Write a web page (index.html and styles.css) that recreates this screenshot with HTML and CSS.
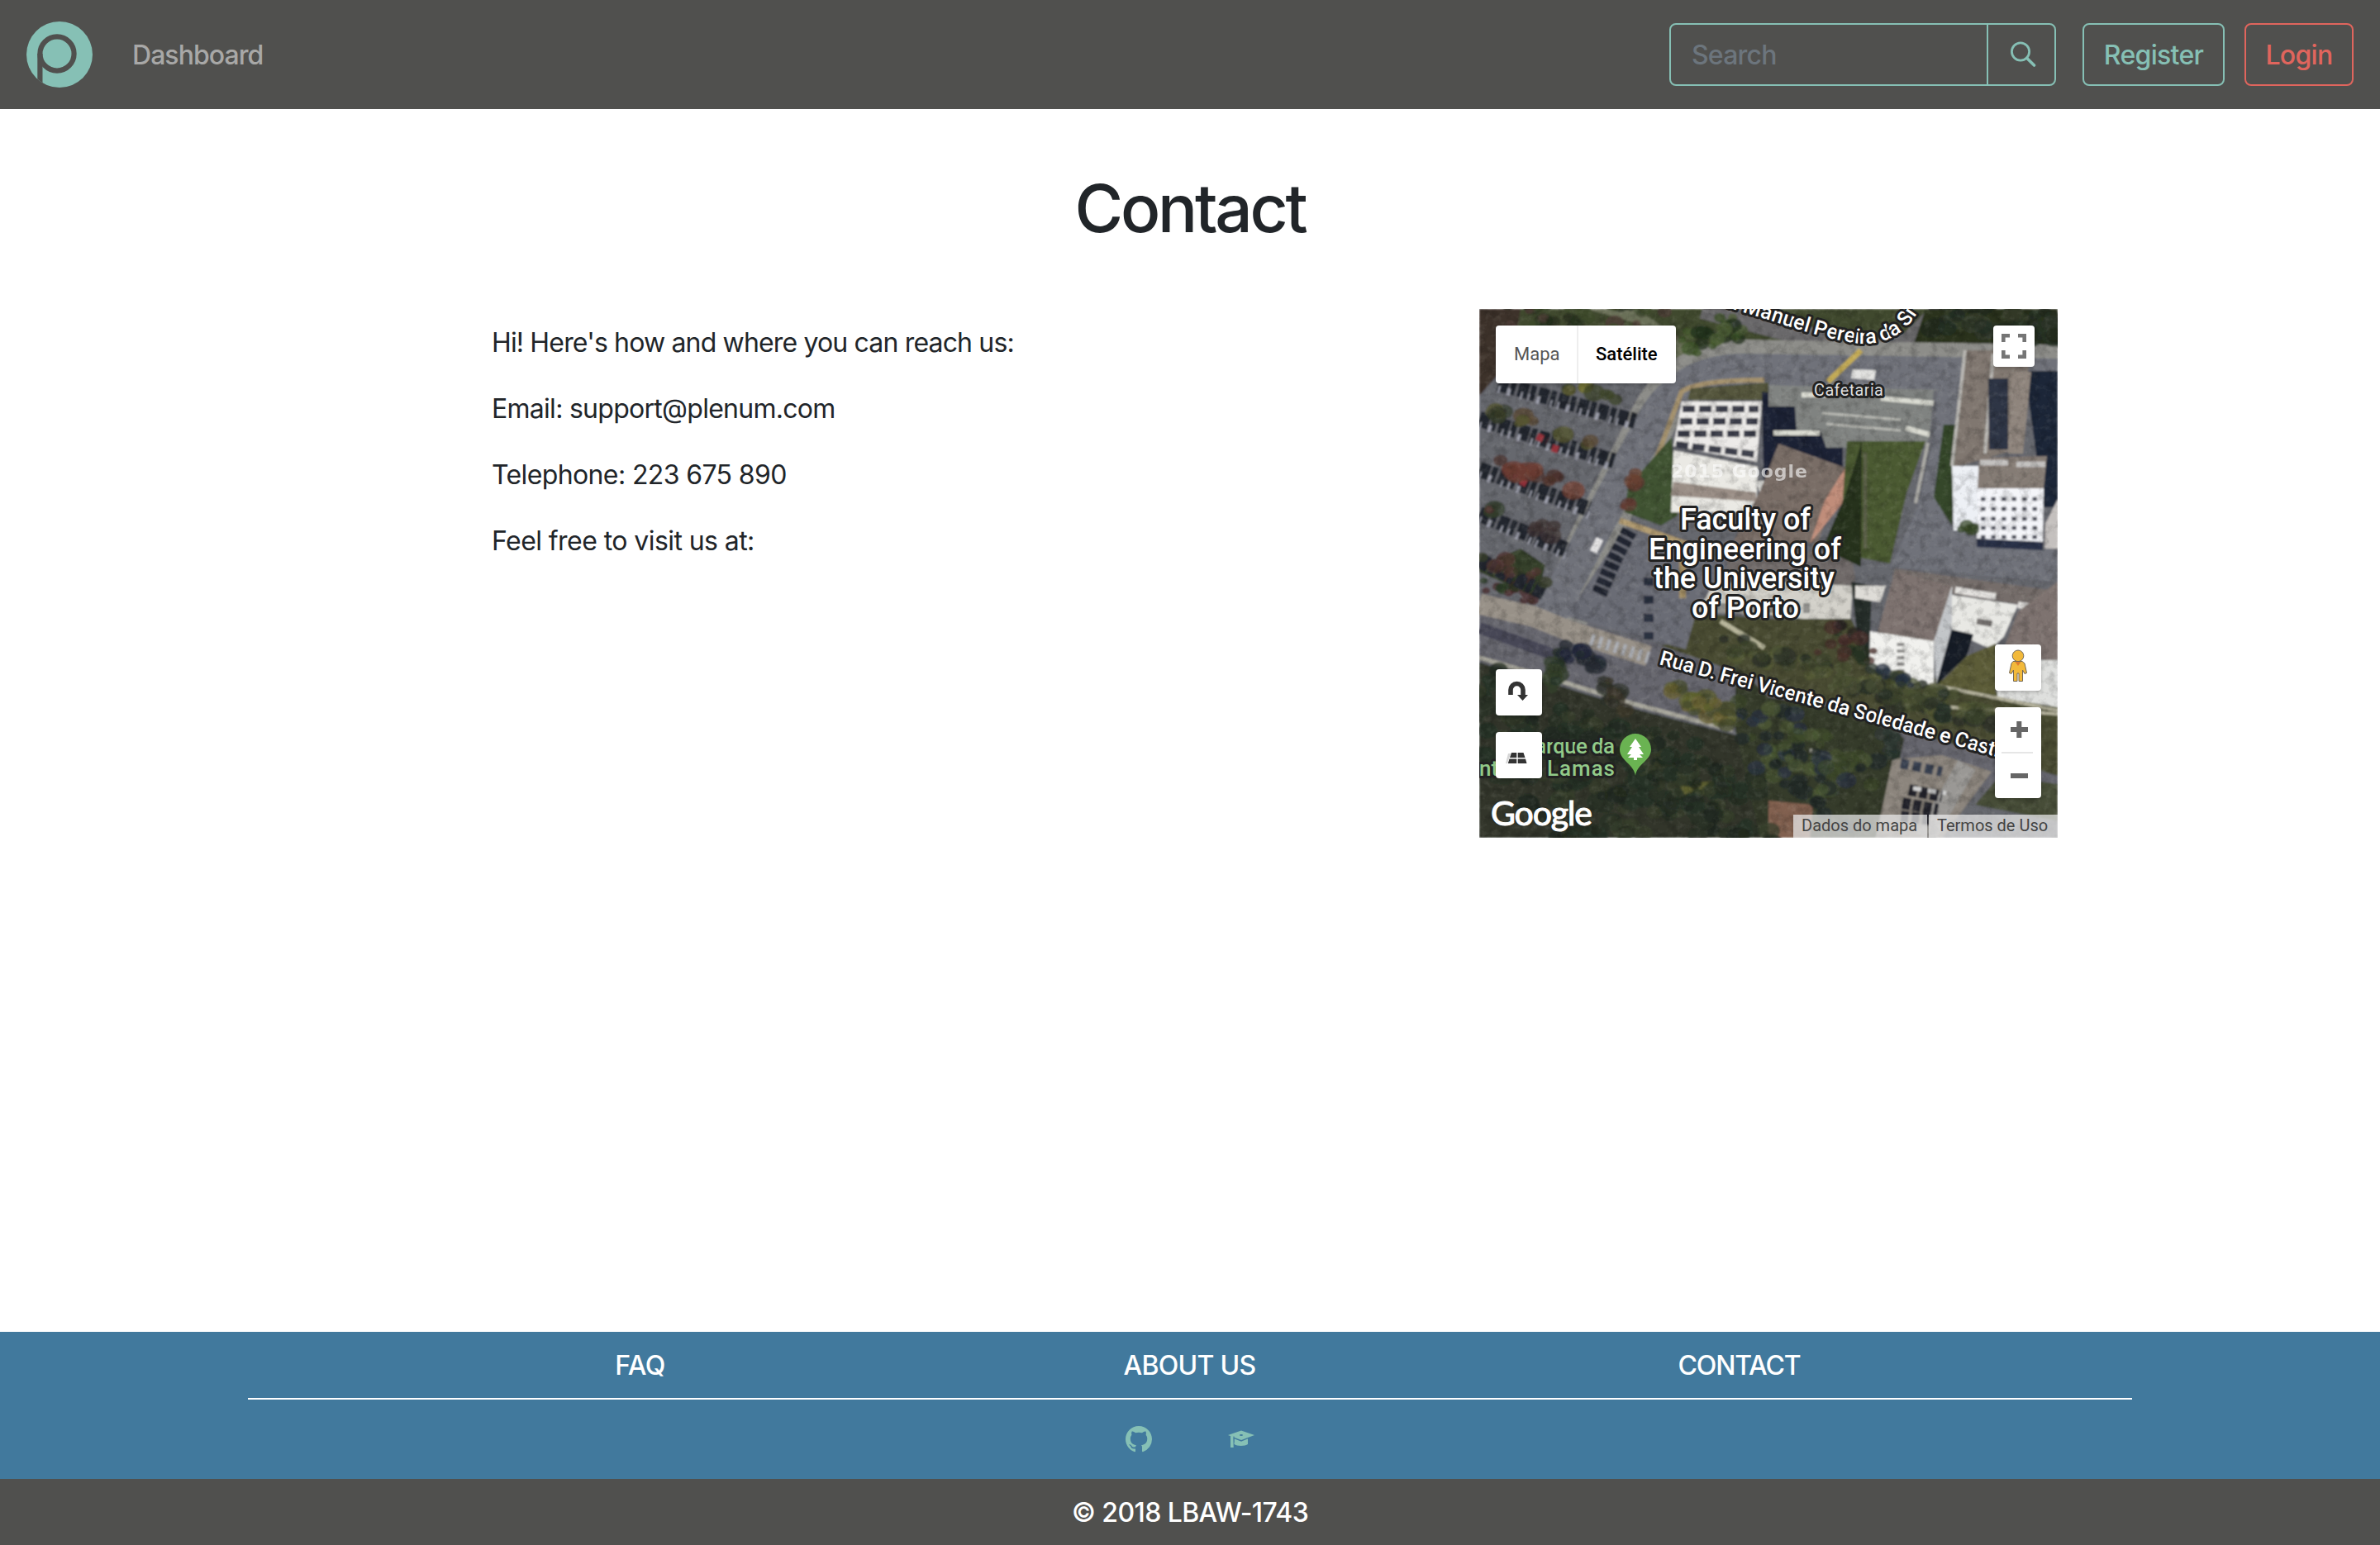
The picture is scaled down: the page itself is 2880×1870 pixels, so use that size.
FILE: index.html
```html
<!DOCTYPE html>
<html lang="en">
<head>
<meta charset="utf-8">
<title>Contact</title>
<link rel="stylesheet" href="styles.css">
</head>
<body>
<header class="navbar">
  <a class="brand"><svg width="80" height="80" viewBox="0 0 80 80"><defs><clipPath id="disc"><circle cx="40" cy="40" r="40"/></clipPath></defs><g clip-path="url(#disc)"><rect width="80" height="80" fill="#86c0b5"/><circle cx="37" cy="39" r="20.6" fill="none" stroke="#50504e" stroke-width="6.2"/><path d="M16.4 39V80" stroke="#50504e" stroke-width="6.2"/></g></svg></a>
  <a class="nav-link"><span class="t-dash">Dashboard</span></a>
  <div class="search">
    <span class="search-input"><span class="t-search">Search</span></span>
    <span class="search-btn"><svg width="32" height="32" viewBox="0 0 32 32" fill="none" stroke="#86c0b5"><circle cx="13" cy="12.5" r="10.6" stroke-width="2.8"/><path d="M20.6 20.2 29.5 29" stroke-width="3.6" stroke-linecap="round"/></svg></span>
  </div>
  <a class="btn btn-register"><span class="t-reg">Register</span></a>
  <a class="btn btn-login"><span class="t-log">Login</span></a>
</header>

<main>
  <h1>Contact</h1>
  <div class="content">
    <section class="info">
      <p class="p1">Hi! Here's how and where you can reach us:</p>
      <p class="p2">Email: support@plenum.com</p>
      <p class="p3">Telephone: 223 675 890</p>
      <p class="p4">Feel free to visit us at:</p>
    </section>
    <section class="map">
      <svg class="tiles" width="700" height="640" viewBox="0 0 700 640">
        <defs>
          <filter id="ground" x="0" y="0" width="100%" height="100%"><feTurbulence type="fractalNoise" baseFrequency=".09" numOctaves="4" seed="8"/><feColorMatrix values="0 0 0 0 0  0 0 0 0 0  0 0 0 0 0  2.6 0 0 0 -1.15"/></filter>
          <filter id="light" x="0" y="0" width="100%" height="100%"><feTurbulence type="fractalNoise" baseFrequency=".13" numOctaves="3" seed="3"/><feColorMatrix values="0 0 0 0 1  0 0 0 0 1  0 0 0 0 .9  0 2 0 0 -1"/></filter>
          <filter id="soft"><feGaussianBlur stdDeviation="1"/></filter>
          <path id="rua" d="M217 430 420 485 720 568"/>
          <path id="silva" d="M262 -12 300 -2 350 13Q420 37 460 42 500 44 524 14L550 -24"/>
        </defs>
        <g filter="url(#soft)">
          <rect width="700" height="640" fill="#66676e"/>
          <!-- lawns along the northern road -->
          <path d="M0 0H700V62H260L230 90 130 50 20 80 0 100Z" fill="#41492f"/>
          <path d="M0 0H50L40 60 0 105Z" fill="#3d302c"/>
          <path d="M130 0 200 20 250 70 280 60 190 0Z" fill="#6b7058"/>
          <path d="M270 0 400 34 470 50 520 40 560 0" fill="none" stroke="#69676b" stroke-width="24"/>
          <path d="M540 0H700V60H520Z" fill="#29331f"/>
          <path d="M100 380 133 290 205 145Q240 66 320 66L700 72" fill="none" stroke="#8d8d89" stroke-width="58"/>
          <path d="M60 420 133 280 205 145Q240 74 320 74L700 80" fill="none" stroke="#70727a" stroke-width="40"/>
          <path d="M211 190 245 100Q265 86 345 86" fill="none" stroke="#a3906d" stroke-width="6"/>
          <path d="M256 96 350 89V110H252Z" fill="#54563d"/>
          <path d="M422 88 462 50" stroke="#c2aa56" stroke-width="7"/>
          <path d="M452 73 480 74 478 86 450 84Z" fill="#e3e3e1"/>
          <path d="M180 215 233 155 240 250 220 262 176 246Z" fill="#3f5230"/>
          <path d="M170 256 255 286" stroke="#b39d73" stroke-width="7"/>
          <!-- buildings around the cafeteria -->
          <path d="M342 100 440 110 440 200 345 240Z" fill="#1d2335"/>
          <path d="M350 92 550 98 545 156 540 165 420 168 412 146 384 150 382 118 350 118Z" fill="#808381"/>
          <path d="M415 126 510 134M420 139 510 147" stroke="#b7b8b2" stroke-width="3"/>
          <path d="M356 150H412M390 104H420M486 108 550 114M516 144 545 152" stroke="#dadbd2" stroke-width="6"/>
          <path d="M245 112H342L336 185 235 166Z" fill="#eceae8"/>
          <path d="M246 121H338M243 136H337M240 151H336M238 164 335 176" stroke="#3b3d48" stroke-width="8" stroke-dasharray="15 5"/>
          <path d="M235 171 337 191 335 246H232Z" fill="#eae9e4"/>
          <path d="M235 209 335 222V233L232 226Z" fill="#9a8e86"/>
          <path d="M335 208H372L345 240Z" fill="#e0e0dc"/>
          <path d="M362 163 443 192 410 282 300 296 340 220Z" fill="#796d66"/>
          <path d="M443 192 445 228 400 284 418 232Z" fill="#c08d7a"/>
          <path d="M300 290 450 295 455 325 450 350H300Z" fill="#706a69"/>
          <path d="M262 332 350 330 452 335 448 390 417 378 350 370 262 366Z" fill="#d2d0c9"/>
          <path d="M280 362H400" stroke="#8c8b88" stroke-width="12" stroke-dasharray="24 4"/>
          <!-- central garden and path -->
          <path d="M445 160 540 160 517 223 497 308 435 296Z" fill="#4b5a33"/>
          <path d="M442 228 463 160 462 312 415 290Z" fill="#27331f"/>
          <path d="M467 174V290" stroke="#5b5f4a" stroke-width="4"/>
          <path d="M550 154 531 240 498 312 690 330 700 310 690 280 600 275 566 260 552 220 575 155 580 90H555Z" fill="#70727a"/>
          <path d="M543 162 528 235" stroke="#abaaa5" stroke-width="4"/>
          <path d="M562 140H580L572 262 550 228Z" fill="#34462a"/>
          <!-- tower -->
          <path d="M660 75H700V240H683Z" fill="#1d2639"/>
          <path d="M588 50 668 50 650 170 574 192Z" fill="#80776f"/>
          <path d="M622 54 612 175M588 50 572 190" stroke="#b9b7b3" stroke-width="4"/>
          <path d="M616 84H640V170H617Z" fill="#2d3445"/>
          <path d="M644 76H668L658 175H640Z" fill="#8f857d"/>
          <path d="M572 190H605V268L574 268Z" fill="#edf0f5"/>
          <path d="M605 180 687 178 683 218 603 218Z" fill="#857b75"/>
          <path d="M606 186H640M650 188H685" stroke="#c3c1bf" stroke-width="7"/>
          <path d="M603 217 683 217 682 282 602 278Z" fill="#f4f5f9"/>
          <path d="M607 230H680M607 242H680M607 254H680M607 265H680M607 276H680" stroke="#494c58" stroke-width="4.500" stroke-dasharray="5.500 7"/>
          <path d="M602 278 682 282V292L602 288Z" fill="#293148"/>
          <path d="M685 260 700 230V290H684Z" fill="#c4c0be"/>
          <!-- planting between campus and street -->
          <path d="M256 368 350 375 450 375 475 430 700 480V565L510 525 330 462 210 410 250 400Z" fill="#484c30"/>
          <path d="M292 378 345 410" stroke="#b8b69b" stroke-width="6"/>
          <path d="M450 330 475 335 472 430 458 400Z" fill="#252d2b"/>
          <!-- south-east buildings -->
          <path d="M503 314 690 340 682 362 572 345 500 325Z" fill="#756d6a"/>
          <path d="M543 336 572 341M576 340 625 348M652 358 684 363" stroke="#e4e2df" stroke-width="8"/>
          <path d="M455 335H492L485 355 455 350Z" fill="#dedcd7"/>
          <path d="M503 317 572 335 550 408 480 398Z" fill="#7e736f"/>
          <path d="M473 390 550 402 550 452 527 460 472 433Z" fill="#f1f1ee"/>
          <path d="M572 335V385L553 455 550 402Z" fill="#c2c5c8"/>
          <path d="M510 404V448" stroke="#8a8987" stroke-width="9" stroke-dasharray="4 4"/>
          <path d="M572 346 652 358 635 396 620 412 572 390Z" fill="#e8e8e4"/>
          <path d="M602 378 620 381" stroke="#6d6967" stroke-width="7"/>
          <path d="M572 388 598 394 590 420 553 455Z" fill="#171d27"/>
          <path d="M652 366 700 330V430L635 410Z" fill="#7e736f"/>
          <path d="M626 425H700V482L627 470Z" fill="#dedfdd"/>
          <path d="M590 420 625 405V468L555 455Z" fill="#5b5c38"/>
          <path d="M545 454 700 486M570 482 700 490" stroke="#b3b09b" stroke-width="4"/>
          <!-- car park entrance and street -->
          <path d="M175 266 300 304 262 370 250 412 105 372Z" fill="#6a6c75"/>
          <path d="M246 300V350" stroke="#a08c64" stroke-width="8"/>
          <path d="M0 343 100 374 210 404 350 452 520 510 700 565V620L520 545 307 509 180 478 100 450 0 425Z" fill="#66666e"/>
          <path d="M0 357 65 372 110 390 205 420" fill="none" stroke="#989188" stroke-width="25"/>
          <path d="M0 386 95 420" fill="none" stroke="#474757" stroke-width="14"/>
          <path d="M0 422 90 448 180 476 307 510" fill="none" stroke="#a9a79d" stroke-width="5"/>
          <path d="M0 318 70 350 80 310 50 290 0 310Z" fill="#36402a"/>
          <!-- park -->
          <path d="M0 428 90 454 180 482 307 515 400 530 500 555 480 640H0Z" fill="#30362a"/>
          <path d="M310 430 350 470 480 490 514 520 490 640H340L310 510Z" fill="#343b2c"/>
          <path d="M500 545 560 540 620 560 560 640H480Z" fill="#8c857d"/>
          <path d="M400 534 445 550" stroke="#a7a69b" stroke-width="4"/>
          <path d="M590 552 540 640" stroke="#9a9895" stroke-width="24"/>
          <path d="M600 600 700 620V575L630 565Z" fill="#474d39"/>
          <path d="M350 595 404 600 400 640H350Z" fill="#81604f"/>
          <path d="M240 575 300 570 310 585 250 590Z" fill="#5a5c2e"/>
          <g id="foliage"></g>
          <g fill="none" id="cars">
            <path d="M23 90 190 136M0 133 163 184M0 194 133 242M0 248 107 292M0 304 80 344" stroke="#22262e" stroke-width="19" stroke-dasharray="13 2 7 3"/>
            <path d="M23 97 190 143M0 141 163 192M0 201 133 250M0 255 107 300" stroke="#9c9eaa" stroke-width="9" stroke-dasharray="2 9 4 13 2 7"/>
            <path d="M70 154 82 160M88 168 98 171M50 208 60 213" stroke="#94323b" stroke-width="9" stroke-dasharray="8 5"/>
            <path d="M182 268 165 300 145 345" stroke="#202532" stroke-width="19" stroke-dasharray="8 3"/>
            <path d="M146 278 138 294" stroke="#e4e3e4" stroke-width="9"/>
            <path d="M205 325V400" stroke="#2b3240" stroke-width="12" stroke-dasharray="10 12"/>
            <path d="M135 400 205 422" stroke="#a9acb2" stroke-width="14" stroke-dasharray="4 6"/>
            <path d="M520 582 560 590M512 598 555 606M510 614 545 618" stroke="#20232b" stroke-width="14" stroke-dasharray="10 3"/>
            <path d="M525 580 565 586" stroke="#d0d0d0" stroke-width="5" stroke-dasharray="10 8"/>
            <path d="M510 550 560 560" stroke="#394050" stroke-width="12" stroke-dasharray="10 5"/>
          </g>
          <g id="crowns"></g>
        </g>
        <rect width="700" height="640" filter="url(#ground)" opacity=".17"/>
        <rect width="700" height="640" filter="url(#light)" opacity=".1"/>
        <text x="232" y="204" class="stamp" textLength="165">2015 Google</text>
        <g class="label">
          <text class="place" x="243" y="267" textLength="158">Faculty of</text>
          <text class="place" x="205" y="303" textLength="233">Engineering of</text>
          <text class="place" x="211" y="338" textLength="219">the University</text>
          <text class="place" x="257" y="374" textLength="130">of Porto</text>
          <text class="cafe" x="405" y="105" textLength="84">Cafetaria</text>
          <text class="road"><textPath href="#rua" textLength="442">Rua D. Frei Vicente da Soledade e Castro</textPath></text>
          <text class="road"><textPath href="#silva" startOffset="38">n Manuel Pereira da Si</textPath></text>
          <text class="park" x="52" y="538" textLength="112">Parque da</text>
          <text class="park" x="0" y="565">nt</text>
          <text class="park" x="82" y="565" textLength="82">Lamas</text>
        </g>
        <path d="M189 565C187 550 170 547 170 533A19 19 0 0 1 208 533C208 547 191 550 189 565Z" fill="#6ab352"/>
        <path d="M189 520 196 530H193L199 539H194L198 543H191V546H187V543H180L184 539H179L185 530H182Z" fill="#fff"/>
        <text class="google" x="14" y="625" textLength="123">Google</text>
      </svg>
      <div class="map-type"><span class="type-map">Mapa</span><span class="type-sat">Satélite</span></div>
      <div class="ctl full"><svg width="30" height="30" viewBox="0 0 30 30" fill="none" stroke="#757575" stroke-width="4.6"><path d="M2.3 10V2.3H10M20 2.3H27.7V10M27.7 20V27.7H20M10 27.7H2.3V20"/></svg></div>
      <div class="ctl rotate"><svg width="56" height="56" viewBox="0 0 56 56"><path d="M18 31V25A7.5 7.5 0 0 1 33 25V32" fill="none" stroke="#333" stroke-width="5.6"/><path d="M26 31H39L32.5 38Z" fill="#333"/></svg></div>
      <div class="ctl tilt"><svg width="56" height="56" viewBox="0 0 56 56" fill="#333"><path d="M19 25H25.3V31H17ZM26.7 25H33.5L35.5 31H26.7ZM16.5 32.5H25.3V38H14.8ZM26.7 32.5H36L37.5 38H26.7Z"/><path d="M15 26H18L14 38H12Z" opacity=".2"/></svg></div>
      <div class="ctl pegman"><svg width="56" height="56" viewBox="0 0 56 56" fill="#f2b93b" stroke="#746957" stroke-width="1"><path d="M22 20.5H33L36 23 38.5 34.5 36 35.5 33.5 31V44.5H29V35H27V44.5H22.5V31L20 35.5 17.5 34.5 20 23Z"/><circle cx="28" cy="13.8" r="6.8"/><path d="M24.5 21H31.5L28 26Z" fill="#df7d2c" stroke="none"/></svg></div>
      <div class="ctl zoom"><svg width="56" height="110" viewBox="0 0 56 110"><path d="M19 27H40M29.3 17V37M19 83H40" stroke="#666" stroke-width="6"/><path d="M8 55H46" stroke="#e6e6e6" stroke-width="2"/></svg></div>
      <div class="credits"><span class="c1">Dados do mapa</span><span class="c2">Termos de Uso</span></div>
    </section>
  </div>
</main>

<footer>
  <div class="footer-links">
    <nav class="links"><a><span class="t-faq">FAQ</span></a><a><span class="t-about">ABOUT US</span></a><a><span class="t-contact">CONTACT</span></a></nav>
    <div class="social">
      <svg width="32" height="32" viewBox="0 0 16 16" fill="#86c0b5"><path d="M8 0C3.58 0 0 3.58 0 8c0 3.54 2.29 6.53 5.47 7.59.4.07.55-.17.55-.38 0-.19-.01-.82-.01-1.49-2.01.37-2.53-.49-2.69-.94-.09-.23-.48-.94-.82-1.13-.28-.15-.68-.52-.01-.53.63-.01 1.08.58 1.23.82.72 1.21 1.87.87 2.33.66.07-.52.28-.87.51-1.07-1.78-.2-3.64-.89-3.64-3.95 0-.87.31-1.59.82-2.15-.08-.2-.36-1.02.08-2.12 0 0 .67-.21 2.2.82.64-.18 1.32-.27 2-.27.68 0 1.36.09 2 .27 1.53-1.04 2.2-.82 2.2-.82.44 1.1.16 1.92.08 2.12.51.56.82 1.27.82 2.15 0 3.07-1.87 3.75-3.65 3.95.29.25.54.73.54 1.48 0 1.07-.01 1.93-.01 2.2 0 .21.15.46.55.38A8.013 8.013 0 0016 8c0-4.42-3.58-8-8-8z"/></svg>
      <svg width="32" height="32" viewBox="0 0 32 32" fill="#86c0b5"><path d="M7.500 14 16 17.500 24 14V22C21 24.600 10.500 24.600 7.500 22Z"/><path d="M6.500 14 16 17.900 25 14" fill="none" stroke="#41799d" stroke-width="1.600"/><path d="M16 5.500 32 11 16 17 0 11Z"/><path d="M7 12.500V20" stroke="#41799d" stroke-width="1"/><path d="M3 11.500 6.300 13 6.700 26H3Z"/><ellipse cx="16" cy="11" rx="2" ry="1.100" fill="#41799d"/></svg>
    </div>
  </div>
  <div class="copyright"><span class="t-copy">© 2018 LBAW-1743</span></div>
</footer>
<script src="map.js"></script>
</body>
</html>
```
FILE: styles.css
```css
* { box-sizing: border-box; }
body {
  margin: 0;
  height: 1870px;
  display: flex;
  flex-direction: column;
  overflow: hidden;
  background: #fff;
  color: #212529;
  font: 32px/48px Inter, "Liberation Sans", sans-serif;
}
.navbar {
  height: 132px;
  padding: 0 32px;
  display: flex;
  align-items: center;
  background: #50504e;
  font-weight: 450;
}
.brand { display: flex; margin-right: 48px; }
.nav-link { color: #a8a8a7; flex: 1; padding-top: 2px; letter-spacing: -0.95px; }
.search {
  display: flex;
  width: 468px;
  height: 76px;
  border: 2px solid #86c0b5;
  border-radius: 8px;
  margin-right: 32px;
}
.search-input { flex: 1; padding: 13px 25px 11px; color: #6c757d; letter-spacing: -0.8px; }
.search-btn {
  width: 82px;
  padding-left: 3px;
  border-left: 2px solid #86c0b5;
  display: flex;
  align-items: center;
  justify-content: center;
}
.btn {
  height: 76px;
  padding-top: 2px;
  border: 2px solid;
  border-radius: 8px;
  display: flex;
  align-items: center;
  justify-content: center;
  letter-spacing: -0.7px;
}
.btn-register { width: 172px; color: #86c0b5; margin-right: 24px; }
.btn-login { width: 132px; color: #e0655d; }
main { flex: 1; }
h1 {
  margin: 72px 0 0;
  font-size: 80px;
  line-height: 96px;
  font-weight: 500;
  letter-spacing: -3.2px;
  text-align: center;
}
.content { display: flex; justify-content: space-between; padding: 0 390px 0 595px; margin-top: 74px; }
.info { padding-top: 17px; }
.info p { margin: 0 0 32px; white-space: nowrap; }
.info .p1 { letter-spacing: -0.84px; }
.info .p2 { letter-spacing: -0.72px; }
.info .p3 { letter-spacing: -0.62px; }
.info .p4 { letter-spacing: -0.57px; }
.map { position: relative; width: 700px; height: 640px; overflow: hidden; font-family: Roboto, sans-serif; }
.tiles { display: block; }
.label { fill: #fff; stroke: #222; stroke-width: 6px; stroke-linejoin: round; paint-order: stroke; font-weight: 500; }
.place { font-size: 36px; }
.cafe { font-size: 20px; fill: #ddd; font-weight: 400; }
.road { font-size: 25px; }
.park { font-size: 26px; fill: #92ca89; }
.stamp { font: bold 22px "DejaVu Sans", sans-serif; fill: #fff; opacity: .6; }
.google { font: 41px Lato, sans-serif; fill: #fff; stroke: #fff; stroke-width: 1px; }
.map-type {
  position: absolute;
  left: 20px;
  top: 20px;
  width: 218px;
  height: 70px;
  display: flex;
  align-items: center;
  background: #fff;
  border-radius: 4px;
  font-size: 22px;
  line-height: 70px;
  box-shadow: 0 2px 4px rgba(0,0,0,.2);
}
.type-map { width: 100px; padding-left: 22px; color: #565656; border-right: 2px solid #eee; }
.type-sat { padding-left: 21px; color: #000; font-weight: 500; }
.ctl {
  position: absolute;
  width: 56px;
  height: 56px;
  background: #fff;
  border-radius: 4px;
  box-shadow: 0 2px 4px rgba(0,0,0,.2);
}
.ctl svg { display: block; }
.full { left: 622px; top: 20px; width: 50px; height: 50px; padding: 10px; }
.rotate { left: 20px; top: 436px; }
.tilt { left: 20px; top: 512px; }
.pegman { left: 624px; top: 406px; }
.zoom { left: 624px; top: 482px; height: 110px; }
.credits {
  position: absolute;
  right: 0;
  bottom: 0;
  display: flex;
  gap: 2px;
  font-size: 20px;
  line-height: 26px;
  color: #444;
}
.credits span { height: 28px; background: rgba(235,235,235,.72); padding-left: 10px; white-space: nowrap; }
.c1 { width: 162px; }
.c2 { width: 156px; }
footer { color: #fff; }
.footer-links { height: 178px; background: #41799d; padding: 0 300px; }
.links {
  height: 82px;
  padding: 17px 142px 0 142px;
  display: grid;
  grid-template-columns: repeat(3, 665px);
  text-align: center;
  border-bottom: 2px solid #fff;
}
.t-faq { letter-spacing: -0.6px; }
.t-about { letter-spacing: -0.7px; }
.t-contact { letter-spacing: -1.2px; }
.t-copy { letter-spacing: -0.6px; }
.social { display: flex; justify-content: center; gap: 92px; padding-top: 32px; }
.copyright { height: 80px; padding-top: 17px; text-align: center; background: #50504e; }
.links, .copyright { font-weight: 500; }
```
FILE: map.js
```js
// Scatter tree crowns over the planted areas: [x1, y1, x2, y2, spread, count, radius, colours]
var seed = 7;
function rnd() { seed = (seed * 16807) % 2147483647; return seed / 2147483647; }
function scatter(id, groups) {
  var out = '';
  groups.forEach(function (g) {
    for (var i = 0; i < g[5]; i++) {
      var t = rnd();
      var x = g[0] + (g[2] - g[0]) * t + (rnd() - .5) * g[4];
      var y = g[1] + (g[3] - g[1]) * t + (rnd() - .5) * g[4];
      var r = g[6] * (.5 + rnd() * .7);
      out += '<ellipse cx="' + x.toFixed(1) + '" cy="' + y.toFixed(1) + '" rx="' + r.toFixed(1) + '" ry="' + (r * .8).toFixed(1) + '" fill="' + g[7][Math.floor(rnd() * g[7].length)] + '" opacity=".75"/>';
    }
  });
  document.getElementById(id).innerHTML = out;
}
var dark = ['#20291f', '#2b3327', '#363e2b', '#263026'];
scatter('foliage', [
  [0, 0, 230, 20, 40, 40, 10, ['#3e4b2c', '#27301f', '#503f37']],
  [260, 40, 310, 20, 30, 24, 9, ['#3d5428', '#4e5f35', '#22301c']],
  [560, 10, 700, 25, 40, 50, 12, dark],
  [300, 410, 620, 495, 32, 80, 12, ['#3c432c', '#575c37', '#282f27', '#4b5234']],
  [0, 480, 160, 610, 110, 90, 14, dark],
  [180, 540, 330, 620, 80, 90, 13, dark],
  [340, 500, 450, 590, 80, 80, 11, ['#222a28', '#3d4a2c', '#2c3541', '#4c5a33']],
  [420, 395, 460, 410, 40, 20, 9, ['#2a2624', '#4b302c', '#263023']],
  [10, 330, 70, 345, 22, 20, 8, ['#2a3a24', '#4b2c2c']]
]);
scatter('crowns', [
  [100, 90, 185, 112, 12, 8, 11, ['#5b5a2d', '#3d4429', '#707033']],
  [10, 124, 155, 164, 14, 14, 11, ['#56562f', '#343b2c', '#584733']],
  [5, 180, 130, 220, 12, 12, 13, ['#6a3a30', '#4a302b', '#774335']],
  [5, 240, 105, 275, 13, 9, 11, ['#5b3733', '#343d2c', '#3d3231']],
  [5, 302, 75, 325, 14, 9, 11, ['#3a4029', '#513431']],
  [190, 196, 178, 240, 12, 7, 10, ['#603a31', '#694232']],
  [90, 405, 95, 460, 14, 16, 11, ['#34402c', '#29342a']],
  [110, 414, 135, 430, 18, 14, 11, ['#20263a', '#252b32']],
  [155, 455, 170, 480, 20, 14, 11, ['#2d322a', '#3d3a2e']],
  [240, 465, 310, 500, 25, 32, 12, ['#5c602e', '#6a6231', '#454b2d']],
  [90, 495, 300, 545, 30, 40, 10, dark],
  [492, 500, 500, 540, 16, 16, 9, ['#25302c', '#303a31']],
  [560, 470, 562, 495, 10, 10, 9, ['#2a342c']],
  [475, 435, 540, 460, 10, 14, 8, ['#303a31', '#273040']],
  [580, 268, 600, 264, 8, 6, 8, ['#344426']]
]);
```
